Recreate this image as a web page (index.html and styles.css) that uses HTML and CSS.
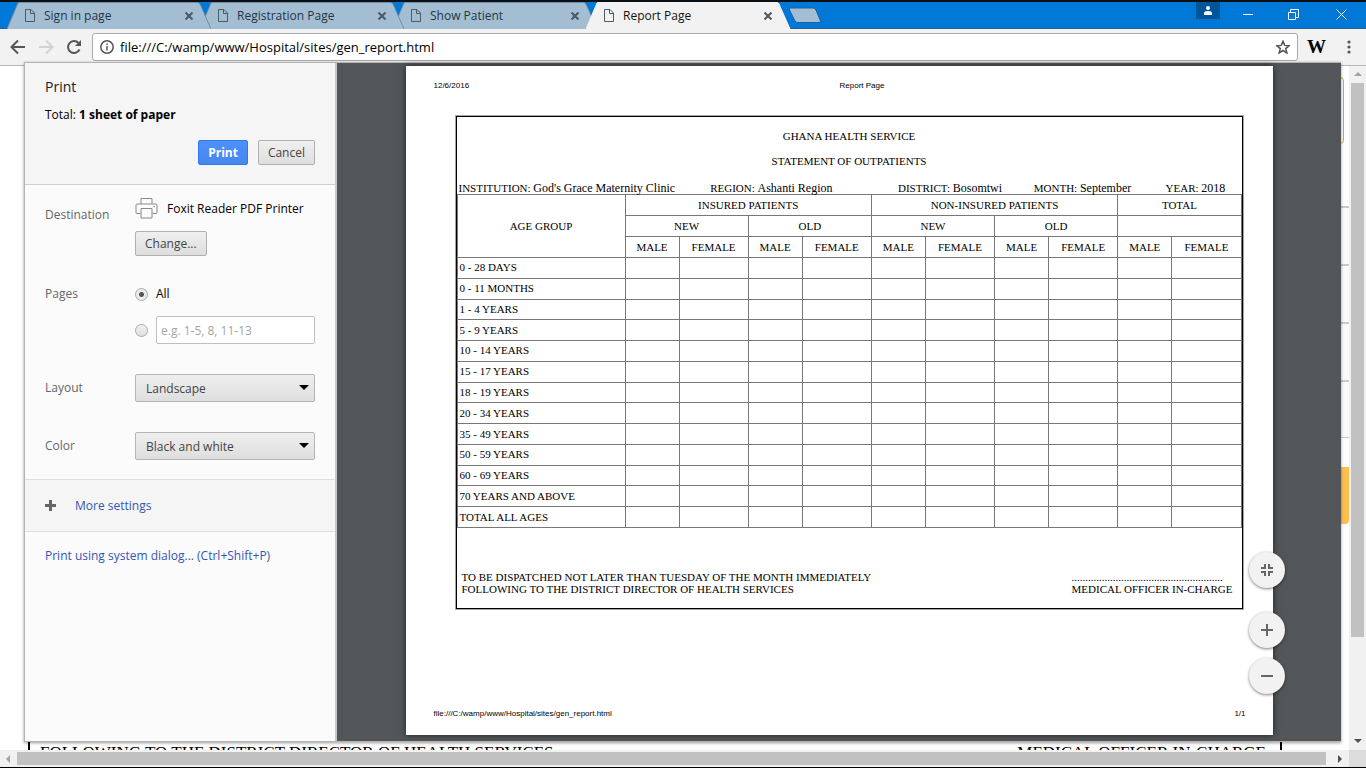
FILE: index.html
```html
<!DOCTYPE html>
<html lang="en">
<head>
<meta charset="utf-8">
<title>Report Page</title>
<link rel="stylesheet" href="styles.css">
</head>
<body>
<header class="titlebar">
  <nav class="tabs">
    <div class="tab tab-1">
      <svg class="tab-shape" viewBox="0 0 206 27" preserveAspectRatio="none"><path d="M0 27L11 1Q11.500 0.500 13 0.500H190Q192 0.500 193 2L204 27"/></svg>
      <svg class="doc-icon" viewBox="0 0 10 13"><path d="M.5.5h5.500l3.500 3.500v8.500h-9zM5.500.5v4h4"/></svg>
      <span class="tab-title">Sign in page</span>
      <button class="tab-close" aria-label="Close Sign in page"><svg viewBox="0 0 8 8"><path d="M.5.5l7 7M7.500.5l-7 7"/></svg></button>
    </div>
    <div class="tab tab-2">
      <svg class="tab-shape" viewBox="0 0 206 27" preserveAspectRatio="none"><path d="M0 27L11 1Q11.500 0.500 13 0.500H190Q192 0.500 193 2L204 27"/></svg>
      <svg class="doc-icon" viewBox="0 0 10 13"><path d="M.5.5h5.500l3.500 3.500v8.500h-9zM5.500.5v4h4"/></svg>
      <span class="tab-title">Registration Page</span>
      <button class="tab-close" aria-label="Close Registration Page"><svg viewBox="0 0 8 8"><path d="M.5.5l7 7M7.500.5l-7 7"/></svg></button>
    </div>
    <div class="tab tab-3">
      <svg class="tab-shape" viewBox="0 0 206 27" preserveAspectRatio="none"><path d="M0 27L11 1Q11.500 0.500 13 0.500H190Q192 0.500 193 2L204 27"/></svg>
      <svg class="doc-icon" viewBox="0 0 10 13"><path d="M.5.5h5.500l3.500 3.500v8.500h-9zM5.500.5v4h4"/></svg>
      <span class="tab-title">Show Patient</span>
      <button class="tab-close" aria-label="Close Show Patient"><svg viewBox="0 0 8 8"><path d="M.5.5l7 7M7.500.5l-7 7"/></svg></button>
    </div>
    <div class="tab tab-active">
      <svg class="tab-shape" viewBox="0 0 206 27" preserveAspectRatio="none"><path d="M0 27L11 1Q11.500 0 13 0H190Q192 0 193 2L204 27"/></svg>
      <svg class="doc-icon" viewBox="0 0 10 13"><path d="M.5.5h5.500l3.500 3.500v8.500h-9zM5.500.5v4h4"/></svg>
      <span class="tab-title">Report Page</span>
      <button class="tab-close" aria-label="Close Report Page"><svg viewBox="0 0 8 8"><path d="M.5.5l7 7M7.500.5l-7 7"/></svg></button>
    </div>
    <button class="new-tab" aria-label="New tab"><svg viewBox="0 0 34 17"><path d="M2.500 1H25Q27 1 28 3L32.500 14Q33 15.500 31 15.500H10Q8 15.500 7 14L1.500 3Q1 1 2.500 1z"/></svg></button>
  </nav>
  <div class="window-controls">
    <button class="profile" aria-label="Profile"><svg viewBox="0 0 8 9"><circle cx="4" cy="2" r="2"/><path d="M0 9V7Q0 5 4 5T8 7V9z"/></svg></button>
    <button class="win" aria-label="Minimize"><svg viewBox="0 0 11 11"><path d="M0 5.500h10"/></svg></button>
    <button class="win" aria-label="Restore"><svg viewBox="0 0 11 11"><path d="M.5 3.500h7v7h-7zM2.500 3V.5h8v8H8"/></svg></button>
    <button class="win" aria-label="Close"><svg viewBox="0 0 11 11"><path d="M.5.5l10 10M10.500.5l-10 10"/></svg></button>
  </div>
</header>

<div class="toolbar">
  <button class="nav-btn" aria-label="Back"><svg viewBox="0 0 16 16"><path d="M15 8H2M8 1.500L1.500 8 8 14.500"/></svg></button>
  <button class="nav-btn nav-off" aria-label="Forward"><svg viewBox="0 0 16 16"><path d="M1 8h13M8 1.500L14.500 8 8 14.500"/></svg></button>
  <button class="nav-btn" aria-label="Reload"><svg viewBox="0 0 16 16"><path d="M13.500 10.500A6 6 0 1 1 12.500 4"/><path class="solid" d="M15 1v6H9z"/></svg></button>
  <div class="address">
    <svg class="info-icon" viewBox="0 0 14 14"><circle cx="7" cy="7" r="6.200"/><path d="M7 6v4.500M7 3.500v1.500"/></svg>
    <input class="url" type="text" aria-label="Address" value="file:///C:/wamp/www/Hospital/sites/gen_report.html">
    <button class="star" aria-label="Bookmark"><svg viewBox="0 0 14 14"><path d="M7 1.200l1.700 4.200 4.500.3-3.500 2.900 1.200 4.300L7 10.500l-3.900 2.400 1.200-4.300L.8 5.700l4.500-.3z"/></svg></button>
  </div>
  <button class="ext" aria-label="Wikipedia extension">W</button>
  <button class="menu" aria-label="Menu"><svg viewBox="0 0 4 14"><circle cx="2" cy="2" r="1.600"/><circle cx="2" cy="7" r="1.600"/><circle cx="2" cy="12" r="1.600"/></svg></button>
</div>

<main class="content">
  <div class="page">
    <div class="card"></div>
    <div class="strip"></div>
    <div class="strip"></div>
    <div class="strip"></div>
    <div class="strip"></div>
    <div class="bar"></div>
    <div class="sheet-end">
      <span>FOLLOWING TO THE DISTRICT DIRECTOR OF HEALTH SERVICES</span>
      <span>MEDICAL OFFICER IN-CHARGE</span>
    </div>
  </div>
  <div class="vscroll">
    <svg class="arrow" viewBox="0 0 8 4"><path fill="#a3a3a3" d="M0 4l4-4 4 4z"/></svg>
    <div class="vthumb"></div>
    <svg class="arrow" viewBox="0 0 8 4"><path fill="#505050" d="M0 0l4 4 4-4z"/></svg>
  </div>

  <section class="dialog" role="dialog" aria-label="Print">
    <form class="panel">
      <div class="panel-head">
        <h1 class="panel-title">Print</h1>
        <p class="total">Total: <b>1 sheet of paper</b></p>
        <div class="actions">
          <button type="button" class="btn btn-primary">Print</button>
          <button type="button" class="btn">Cancel</button>
        </div>
      </div>
      <div class="settings">
        <div class="row row-dest">
          <span class="label">Destination</span>
          <div class="field">
            <div class="printer">
              <svg class="printer-icon" viewBox="0 0 22 21"><path d="M5.500 6V.5h11V6M5 15.500H1Q.5 15.500.5 14.500V7Q.5 6 1.500 6h19Q21.500 6 21.500 7v7.500Q21.500 15.500 21 15.500H17M5.500 10.500h11v9.500h-11zM18 8.500h1.500"/></svg>
              <span>Foxit Reader PDF Printer</span>
            </div>
            <button type="button" class="btn">Change...</button>
          </div>
        </div>
        <div class="row row-pages">
          <span class="label">Pages</span>
          <div class="field">
            <label class="choice"><input type="radio" name="pages" checked> All</label>
            <div class="choice choice-range">
              <input type="radio" name="pages" aria-label="Page range">
              <input class="range" type="text" aria-label="Pages to print" placeholder="e.g. 1-5, 8, 11-13">
            </div>
          </div>
        </div>
        <div class="row row-select">
          <label class="label" for="layout">Layout</label>
          <div class="select"><select id="layout"><option>Landscape</option><option>Portrait</option></select></div>
        </div>
        <div class="row row-select">
          <label class="label" for="color">Color</label>
          <div class="select"><select id="color"><option>Black and white</option><option>Color</option></select></div>
        </div>
      </div>
      <div class="more">
        <svg class="plus" viewBox="0 0 11 11"><path d="M5.500 0v11M0 5.500h11"/></svg>
        <a href="#more">More settings</a>
      </div>
      <div class="system"><a href="#system">Print using system dialog... (Ctrl+Shift+P)</a></div>
    </form>

    <div class="viewer">
      <article class="paper">
        <div class="paper-head"><span>12/6/2016</span><span>Report Page</span></div>
        <div class="frame">
          <h2 class="heading">GHANA HEALTH SERVICE</h2>
          <h2 class="heading">STATEMENT OF OUTPATIENTS</h2>
          <div class="facts">
            <span>INSTITUTION: <em>God's Grace Maternity Clinic</em></span>
            <span>REGION: <em>Ashanti Region</em></span>
            <span>DISTRICT: <em>Bosomtwi</em></span>
            <span>MONTH: <em>September</em></span>
            <span>YEAR: <em>2018</em></span>
          </div>
          <table class="report">
            <colgroup><col class="c-age"><col class="c-male"><col><col class="c-male"><col><col class="c-male"><col><col class="c-male"><col><col class="c-male"><col></colgroup>
            <thead>
              <tr><th rowspan="3">AGE GROUP</th><th colspan="4">INSURED PATIENTS</th><th colspan="4">NON-INSURED PATIENTS</th><th colspan="2">TOTAL</th></tr>
              <tr><th colspan="2">NEW</th><th colspan="2">OLD</th><th colspan="2">NEW</th><th colspan="2">OLD</th><th colspan="2"></th></tr>
              <tr><th>MALE</th><th>FEMALE</th><th>MALE</th><th>FEMALE</th><th>MALE</th><th>FEMALE</th><th>MALE</th><th>FEMALE</th><th>MALE</th><th>FEMALE</th></tr>
            </thead>
            <tbody>
              <tr><td>0 - 28 DAYS</td><td></td><td></td><td></td><td></td><td></td><td></td><td></td><td></td><td></td><td></td></tr>
              <tr><td>0 - 11 MONTHS</td><td></td><td></td><td></td><td></td><td></td><td></td><td></td><td></td><td></td><td></td></tr>
              <tr><td>1 - 4 YEARS</td><td></td><td></td><td></td><td></td><td></td><td></td><td></td><td></td><td></td><td></td></tr>
              <tr><td>5 - 9 YEARS</td><td></td><td></td><td></td><td></td><td></td><td></td><td></td><td></td><td></td><td></td></tr>
              <tr><td>10 - 14 YEARS</td><td></td><td></td><td></td><td></td><td></td><td></td><td></td><td></td><td></td><td></td></tr>
              <tr><td>15 - 17 YEARS</td><td></td><td></td><td></td><td></td><td></td><td></td><td></td><td></td><td></td><td></td></tr>
              <tr><td>18 - 19 YEARS</td><td></td><td></td><td></td><td></td><td></td><td></td><td></td><td></td><td></td><td></td></tr>
              <tr><td>20 - 34 YEARS</td><td></td><td></td><td></td><td></td><td></td><td></td><td></td><td></td><td></td><td></td></tr>
              <tr><td>35 - 49 YEARS</td><td></td><td></td><td></td><td></td><td></td><td></td><td></td><td></td><td></td><td></td></tr>
              <tr><td>50 - 59 YEARS</td><td></td><td></td><td></td><td></td><td></td><td></td><td></td><td></td><td></td><td></td></tr>
              <tr><td>60 - 69 YEARS</td><td></td><td></td><td></td><td></td><td></td><td></td><td></td><td></td><td></td><td></td></tr>
              <tr><td>70 YEARS AND ABOVE</td><td></td><td></td><td></td><td></td><td></td><td></td><td></td><td></td><td></td><td></td></tr>
              <tr><td>TOTAL ALL AGES</td><td></td><td></td><td></td><td></td><td></td><td></td><td></td><td></td><td></td><td></td></tr>
            </tbody>
          </table>
          <div class="sign">
            <p>TO BE DISPATCHED NOT LATER THAN TUESDAY OF THE MONTH IMMEDIATELY<br>FOLLOWING TO THE DISTRICT DIRECTOR OF HEALTH SERVICES</p>
            <p>.......................................................<br>MEDICAL OFFICER IN-CHARGE</p>
          </div>
        </div>
        <div class="paper-foot"><span>file:///C:/wamp/www/Hospital/sites/gen_report.html</span><span>1/1</span></div>
      </article>
      <div class="zoom-tools">
        <button class="round fit" aria-label="Fit to page"><svg viewBox="0 0 12 12"><path d="M4 0v4H0M8 0v4h4M4 12V8H0M8 12V8h4"/></svg></button>
        <button class="round" aria-label="Zoom in"><svg viewBox="0 0 12 12"><path d="M6 0v12M0 6h12"/></svg></button>
        <button class="round" aria-label="Zoom out"><svg viewBox="0 0 12 12"><path d="M0 6h12"/></svg></button>
      </div>
    </div>
  </section>
</main>

<div class="hscroll">
  <svg class="side-arrow" viewBox="0 0 4 8"><path fill="#a3a3a3" d="M4 0L0 4l4 4z"/></svg>
  <div class="hthumb"></div>
  <svg class="side-arrow" viewBox="0 0 4 8"><path fill="#505050" d="M0 0l4 4-4 4z"/></svg>
  <div class="corner"></div>
</div>
</body>
</html>
```
FILE: styles.css
```css
* { box-sizing: border-box; }

body {
  margin: 0;
  height: 100vh;
  display: flex;
  flex-direction: column;
  overflow: hidden;
  background: #fff;
  border-bottom: 1px solid #000;
  font-family: "Open Sans", "Noto Sans", sans-serif;
  font-size: 12px;
  color: #000;
}

button { font: inherit; border: 0; padding: 0; background: none; }
svg { display: block; fill: none; }
h1, h2, p { margin: 0; font-weight: normal; }
a { color: #3355b5; text-decoration: none; }

/* Title bar */
.titlebar {
  display: flex;
  justify-content: space-between;
  height: 29px;
  flex: none;
  background: #0078d7;
  border-top: 2px solid #0b1016;
  border-bottom: 1px solid #2f6088;
}
.tabs { display: flex; padding-left: 7px; }
.tab {
  position: relative;
  display: flex;
  align-items: center;
  width: 206px;
  height: 27px;
  margin-right: -13px;
  padding: 0 20px 0 18px;
  color: #1f3646;
}
.tab-1 { z-index: 3; }
.tab-2 { z-index: 2; }
.tab-3 { z-index: 1; }
.tab-active { z-index: 4; color: #111; }
.tab-shape {
  position: absolute;
  inset: 0;
  width: 100%;
  height: 100%;
  z-index: -1;
  fill: #a3bed2;
  stroke: #6f8fa8;
}
.tab-active .tab-shape { fill: #f2f2f2; stroke: #f2f2f2; }
.doc-icon { width: 10px; height: 13px; stroke: #4a5b68; }
.tab-title { flex: 1; margin-left: 9px; }
.tab-close { width: 8px; }
.tab-close svg { width: 8px; height: 8px; stroke: #4b5862; stroke-width: 2; }
.new-tab { margin-left: 9px; }
.new-tab svg { width: 34px; height: 17px; fill: #a3bed2; stroke: #1b5f9c; }
.window-controls { display: flex; }
.profile {
  width: 24px;
  height: 17px;
  margin-right: 6px;
  background: #00549a;
}
.profile svg { width: 8px; height: 9px; margin: 0 auto; fill: #fff; }
.win { width: 45px; height: 24px; }
.win svg { width: 11px; height: 11px; margin: 0 auto; stroke: #fff; }
.win:last-child { width: 50px; }

/* Toolbar */
.toolbar {
  display: flex;
  align-items: center;
  height: 37px;
  flex: none;
  padding-left: 10px;
  background: #f2f2f2;
  border-bottom: 1px solid #b8b6b8;
}
.nav-btn { width: 16px; margin-right: 12px; }
.nav-btn svg { width: 16px; height: 16px; stroke: #555; stroke-width: 2; }
.nav-off svg { stroke: #d2d2d2; }
.nav-btn .solid { fill: #555; stroke: none; }
.address {
  flex: 1;
  display: flex;
  align-items: center;
  height: 28px;
  margin: 0 9px 0 -2px;
  padding: 0 7px;
  background: #fff;
  border: 1px solid #a9a9a9;
  border-radius: 3px;
}
.info-icon { width: 14px; height: 14px; stroke: #555; stroke-width: 1.500; }
.url {
  flex: 1;
  margin-left: 6px;
  padding: 0;
  border: 0;
  font: 13px "Open Sans", "Noto Sans", sans-serif;
}
.star svg { width: 14px; height: 14px; stroke: #555; stroke-width: 1.500; }
.ext {
  width: 18px;
  font: bold 19px/20px "Liberation Serif", serif;
}
.menu { width: 4px; margin: 0 15px 0 22px; }
.menu svg { width: 4px; height: 14px; fill: #555; }

/* Web page behind the dialog */
.content { position: relative; display: flex; flex: 1; min-height: 0; }
.page {
  flex: 1;
  min-width: 0;
  overflow: hidden;
  padding: 11px 0 0 28px;
}
.card {
  height: 67px;
  margin: 0 5px 62px 0;
  border: 1px solid #e0a52f;
  border-radius: 4px;
}
.strip { height: 58px; background: #fafafa; border-top: 2px solid #c9c9c9; }
.strip:nth-of-type(5) { border-bottom: 1px solid #c9c9c9; }
.bar { height: 57px; margin-top: 29px; background: #ffbf4f; border-radius: 0 0 4px 0; }
.sheet-end {
  display: flex;
  justify-content: space-between;
  height: 260px;
  margin: 10px 67px 0 0;
  padding: 207px 14px 0 10px;
  border: 2px solid #000;
  font: 17px/20px "Liberation Serif", serif;
}
.vscroll {
  display: flex;
  flex-direction: column;
  align-items: center;
  width: 17px;
  background: #f1f1f1;
}
.arrow { width: 8px; height: 4px; margin: 6px 0 7px; }
.vthumb { flex: none; width: 13px; height: 81%; margin-bottom: auto; background: #c1c1c1; }
.hscroll {
  display: flex;
  align-items: center;
  flex: none;
  height: 17px;
  background: #f1f1f1;
}
.hthumb { flex: 1; height: 13px; margin-right: 6px; background: #c1c1c1; }
.side-arrow { width: 4px; height: 8px; margin: 0 7px 0 6px; }
.corner { width: 17px; height: 17px; background: #dcdcdc; }

/* Print dialog */
.dialog {
  position: absolute;
  z-index: 5;
  top: -4px;
  right: 25px;
  bottom: 8px;
  left: 24px;
  display: flex;
  border: 1px solid #b4b4b4;
  border-right: 0;
  background: #fbfbfb;
  box-shadow: 0 1px 3px rgba(0, 0, 0, .4);
}
.panel { flex: none; width: 312px; border-right: 2px solid #c6c8ca; }
.panel-head {
  padding: 14px 20px 19px;
  background: #f5f5f5;
  border-bottom: 1px solid #cfcfcf;
}
.panel-title { font-size: 14px; line-height: 20px; color: #222; }
.total { margin-top: 9px; line-height: 18px; }
.actions { display: flex; justify-content: flex-end; gap: 10px; margin-top: 16px; }
.btn {
  display: block;
  height: 25px;
  padding: 0 9px;
  line-height: 22px;
  color: #444;
  background: linear-gradient(#efefef, #dedede);
  border: 1px solid #b0b0b0;
  border-radius: 2px;
}
.btn-primary {
  color: #fff;
  font-weight: bold;
  background: linear-gradient(#4d90fe, #4787ed);
  border-color: #3079ed;
}
.settings { padding: 11px 20px 19px; border-bottom: 1px solid #dedede; }
.row { display: flex; }
.label { flex: none; width: 90px; line-height: 18px; color: #666; }
.field { flex: 1; min-width: 0; }
.row-dest .label { margin-top: 10px; }
.printer { display: flex; align-items: center; gap: 9px; height: 24px; margin-bottom: 11px; white-space: nowrap; }
.printer-icon { width: 23px; height: 21px; stroke: #8a8a8a; }
.row-pages { margin-top: 29px; }
.choice { display: flex; align-items: center; gap: 8px; line-height: 18px; }
.choice-range { margin-top: 13px; }
.choice input[type="radio"] {
  appearance: none;
  flex: none;
  width: 13px;
  height: 13px;
  margin: 0;
  border: 1px solid #aaa;
  border-radius: 50%;
  background: linear-gradient(#f2f2f2, #dedede);
}
.choice input[type="radio"]:checked { background: radial-gradient(circle, #555 0 2px, #ececec 3px); }
.range {
  flex: 1;
  min-width: 0;
  height: 28px;
  padding: 0 4px;
  font: inherit;
  background: #fff;
  border: 1px solid #bfbfbf;
  border-radius: 2px;
}
.range::placeholder { color: #a5a5a5; }
.row-select { align-items: center; margin-top: 30px; }
.select { position: relative; flex: 1; }
.select select {
  appearance: none;
  display: block;
  width: 100%;
  height: 28px;
  padding: 0 10px;
  font: inherit;
  color: #444;
  background: linear-gradient(#efefef, #dedede);
  border: 1px solid #b5b5b5;
  border-radius: 2px;
}
.select::after {
  content: "";
  position: absolute;
  top: 11px;
  right: 6px;
  border: 5px solid transparent;
  border-top-color: #000;
  border-bottom: 0;
}
.more {
  display: flex;
  align-items: center;
  gap: 19px;
  height: 52px;
  padding: 0 20px;
  background: #f5f5f5;
  border-bottom: 1px solid #dedede;
}
.plus { width: 11px; height: 11px; stroke: #666; stroke-width: 3; }
.system { padding: 15px 20px; line-height: 18px; }

/* Preview */
.viewer { position: relative; flex: 1; background: #525659; }
.paper {
  display: flex;
  flex-direction: column;
  width: calc(100% - 137px);
  height: calc(100% - 9px);
  margin: 3px auto 6px;
  padding: 14px 30px 15px 50px;
  background: #fff;
  box-shadow: 0 0 6px rgba(0, 0, 0, .6);
}
.paper-head, .paper-foot {
  margin: 0 -3px 0 -22px;
  font: 8px/12px "Liberation Sans", sans-serif;
}
.paper-head { display: grid; grid-template-columns: 1fr 1fr; }
.paper-foot { display: flex; justify-content: space-between; margin-top: auto; }
.frame {
  margin-top: 24px;
  padding: 13px 0;
  border: 1px solid #000;
  box-shadow: 0 0 0 1px #a5a5a5;
  font: 11px/13px "Liberation Serif", serif;
}
.heading { margin-bottom: 12px; font-size: 11px; line-height: 13px; text-align: center; }
.facts {
  display: grid;
  grid-template-columns: 252fr 188fr 136fr 132fr 76fr;
  align-items: baseline;
  height: 14px;
  padding-left: 2px;
  line-height: 16px;
  white-space: nowrap;
}
.facts em { font-style: normal; font-size: 12px; }
.report {
  width: 100%;
  height: 334px;
  table-layout: fixed;
  border-collapse: collapse;
  border: 1px solid #222;
}
.c-age { width: 168px; }
.c-male { width: 54px; }
.report th, .report td {
  padding: 3px 2px;
  border: 1px solid #777;
  font-weight: normal;
  text-align: left;
}
.report th { padding-top: 4px; text-align: center; }
.sign {
  display: flex;
  justify-content: space-between;
  margin-top: 43px;
  padding: 0 9px 0 5px;
  line-height: 12px;
}
.zoom-tools {
  position: absolute;
  right: 56px;
  bottom: 47px;
  display: flex;
  flex-direction: column;
  gap: 10px;
}
.round {
  width: 36px;
  height: 36px;
  border-radius: 50%;
  background: #f2f2f2;
  box-shadow: 0 1px 3px rgba(0, 0, 0, .5);
}
.fit { margin-bottom: 14px; }
.round svg { width: 12px; height: 12px; margin: 0 auto; stroke: #666; stroke-width: 2; }
```
